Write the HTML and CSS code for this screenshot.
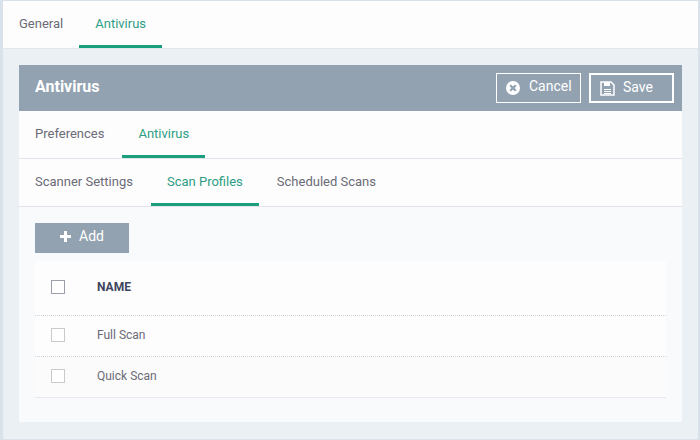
FILE: index.html
```html
<!DOCTYPE html>
<html lang="en">
<head>
<meta charset="utf-8">
<title>Antivirus</title>
<link rel="stylesheet" href="styles.css">
</head>
<body>
<div class="page">
  <nav class="tabs top-tabs">
    <a class="tab">General</a>
    <a class="tab active">Antivirus</a>
  </nav>
  <main class="content">
    <section class="card">
      <header class="card-head">
        <h1>Antivirus</h1>
        <div class="actions">
          <button class="btn cancel">
            <svg class="ico" width="14" height="14" viewBox="0 0 14 14"><circle cx="7" cy="7" r="7" fill="#fff"/><path d="M4.200 4.200l5.600 5.600M9.800 4.200l-5.600 5.600" stroke="#92a2b1" stroke-width="2.200" fill="none"/></svg>
            <span class="cancel-label">Cancel</span>
          </button>
          <button class="btn save">
            <svg class="ico" width="15" height="15" viewBox="0 0 15 15"><path d="M1 1h10l3 3v10H1z" fill="none" stroke="#fff" stroke-width="1.5"/><path d="M4 1h6v4H4z" fill="#fff"/><path d="M4 8.500h7M4 10.500h7M4 12.500h7" stroke="#fff" stroke-width="1"/></svg>
            <span class="save-label">Save</span>
          </button>
        </div>
      </header>
      <nav class="tabs inner-tabs">
        <a class="tab">Preferences</a>
        <a class="tab active">Antivirus</a>
      </nav>
      <nav class="tabs inner-tabs">
        <a class="tab">Scanner Settings</a>
        <a class="tab active">Scan Profiles</a>
        <a class="tab">Scheduled Scans</a>
      </nav>
      <div class="card-body">
        <button class="add">
          <svg width="11" height="11" viewBox="0 0 11 11"><path d="M5.500 0v11M0 5.500h11" stroke="#fff" stroke-width="3"/></svg>
          <span>Add</span>
        </button>
        <div class="table">
          <div class="row head-row">
            <span class="box strong"></span>
            <span class="name">NAME</span>
          </div>
          <div class="row">
            <span class="box"></span>
            <span>Full Scan</span>
          </div>
          <div class="row last">
            <span class="box"></span>
            <span>Quick Scan</span>
          </div>
        </div>
      </div>
    </section>
  </main>
</div>
</body>
</html>
```
FILE: styles.css
```css
* { box-sizing: border-box; }
html, body { margin: 0; height: 100%; }
body {
  width: 700px;
  height: 440px;
  overflow: hidden;
  background: #d9e2ea;
  font-family: Roboto, "Liberation Sans", sans-serif;
  color: #6b6b76;
  font-size: 13px;
}
.page {
  margin: 1px 2px 1px 3px;
  height: 438px;
  background: #ebf0f4;
  display: flex;
  flex-direction: column;
}
.tabs { display: flex; background: #fdfdfe; }
.tab {
  display: flex;
  align-items: center;
  padding: 0 16px;
  border-bottom: 3px solid transparent;
  font-size: 13px;
}
.tab.active { color: #2d9d84; border-bottom-color: #1a9f7d; }
.top-tabs {
  height: 48px;
  border-bottom: 1px solid #e2e6ee;
  align-items: stretch;
}
.top-tabs .tab { height: 47px; }
.content { padding: 16px 16px 0; flex: 0 0 auto; }
.card { height: 357px; width: 663px; display: flex; flex-direction: column; }
.card-head {
  height: 46px;
  background: #92a2b1;
  color: #fff;
  display: flex;
  align-items: center;
  justify-content: space-between;
  padding: 0 8px 0 16px;
}
.card-head h1 { margin: 0; padding-bottom: 3px; font-size: 16px; font-weight: 700; color: #fff; }
.actions { display: flex; gap: 8px; }
.btn {
  height: 30px;
  background: transparent;
  color: #fff;
  font: 14px Roboto, "Liberation Sans", sans-serif;
  display: flex;
  align-items: center;
  padding: 0;
  cursor: pointer;
}
.btn.cancel { width: 85px; border: 1px solid #fff; padding-left: 9px; gap: 9px; }
.cancel-label { padding-bottom: 4px; }
.btn.save { width: 85px; border: 2px solid #fff; padding-left: 9px; gap: 8px; }
.save-label { padding-bottom: 2px; }
.ico { flex: none; }
.inner-tabs { height: 48px; border-bottom: 1px solid #e4e3ec; align-items: stretch; }
.inner-tabs .tab { height: 47px; }
.inner-tabs .tab + .tab { margin-left: 2px; }
.card-body {
  flex: 1;
  background: #f8fafc;
  background-image: radial-gradient(#e6eff6 0.5px, transparent 0.6px);
  background-size: 2px 2px;
  padding: 16px 16px 0;
}
.add {
  width: 94px;
  height: 30px;
  border: 0;
  background: #92a2b1;
  color: #fff;
  font: 14px Roboto, "Liberation Sans", sans-serif;
  display: flex;
  align-items: center;
  justify-content: center;
  gap: 8px;
  padding: 0 0 4px;
}
.table { margin-top: 8px; width: 631px; }
.row {
  display: flex;
  align-items: center;
  height: 41px;
  padding: 0 0 2px 16px;
  background: #fdfdfd;
  border-bottom: 1px dotted #cfd3da;
  font-size: 12px;
}
.head-row { height: 55px; }
.row.last { background: #fbfbfc; border-bottom: 1px solid #e6e8ec; }
.box {
  width: 14px;
  height: 14px;
  border: 1px solid #c9cacc;
  background: #fff;
  margin-right: 32px;
  flex: none;
}
.box.strong { border-color: #9a9fa9; }
.name { font-weight: 700; color: #3d4560; font-size: 12px; }
```
